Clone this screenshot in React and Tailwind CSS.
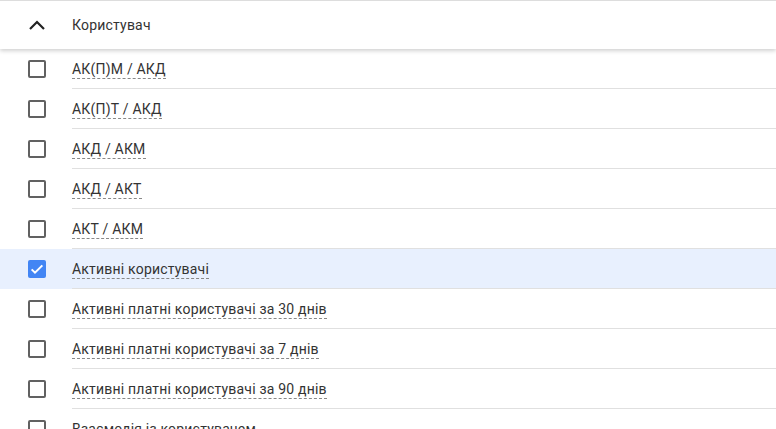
const items = [
  { label: "АК(П)М / АКД" },
  { label: "АК(П)Т / АКД" },
  { label: "АКД / АКМ" },
  { label: "АКД / АКТ" },
  { label: "АКТ / АКМ" },
  { label: "Активні користувачі", checked: true },
  { label: "Активні платні користувачі за 30 днів" },
  { label: "Активні платні користувачі за 7 днів" },
  { label: "Активні платні користувачі за 90 днів" },
  { label: "Взаємодія із користувачем" },
];

const Checkbox = ({ checked }) =>
  checked ? (
    <div className="w-[18px] h-[18px] rounded-[2px] bg-[#4285f4] flex items-center justify-center">
      <svg width="16" height="16" viewBox="0 0 24 24" fill="none">
        <path d="M4 12.5l5 5 11-11" stroke="white" strokeWidth="3" />
      </svg>
    </div>
  ) : (
    <div className="w-[18px] h-[18px] rounded-[2px] border-2 border-[#616161]" />
  );

export default function App() {
  return (
    <div className="h-[429px] w-[776px] overflow-hidden bg-white font-['Roboto',sans-serif] text-[14px] tracking-[0.2px] text-[#333]">
      <div className="relative z-10 h-[49px] flex items-center border-t border-[#ddd] bg-white shadow-[0_2px_4px_rgba(0,0,0,0.18)]">
        <div className="w-[72px] flex justify-center pl-[1px]">
          <svg width="24" height="24" viewBox="0 0 24 24" fill="none">
            <path d="M5 16l7-7 7 7" stroke="#222" strokeWidth="2.2" />
          </svg>
        </div>
        <span className="text-[#333]">Користувач</span>
      </div>
      <div>
        {items.map((it) => (
          <div
            key={it.label}
            className={`h-[40px] flex items-center ${it.checked ? "bg-[#e8f0fe]" : ""}`}
          >
            <div className="w-[72px] flex justify-center pl-[1px]">
              <Checkbox checked={it.checked} />
            </div>
            <div className="flex-1 h-full flex items-center border-b border-[#e0e0e0]">
              <span className="border-b border-dashed border-[#888] leading-[18px] pt-[2px]">
                {it.label}
              </span>
            </div>
          </div>
        ))}
      </div>
    </div>
  );
}
